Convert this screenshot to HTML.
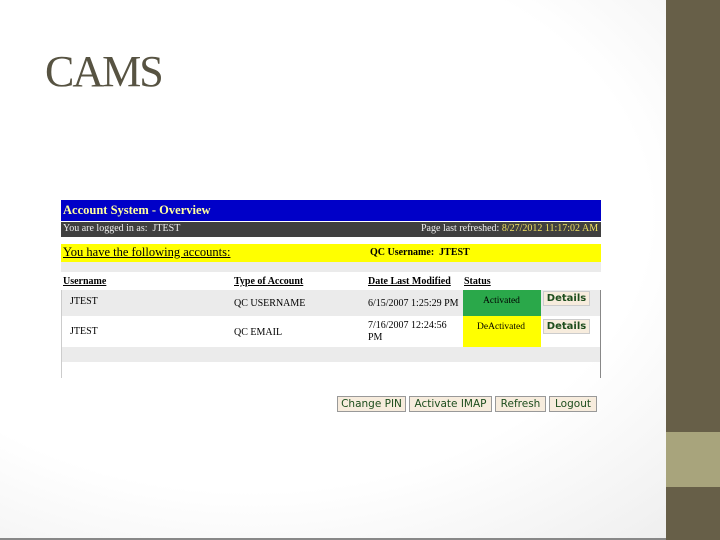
<!DOCTYPE html><html><head><style>
body{margin:0;width:720px;height:540px;position:relative;overflow:hidden;font-family:"Liberation Serif",serif;
background:radial-gradient(ellipse at 35% 40%,#fff 60%,#ececec 100%);}
.a{position:absolute}
.t{font-size:11px;white-space:nowrap}
.btn{position:absolute;top:396px;background:#f7ecdd;border:1px solid #999;font-family:"DejaVu Sans",sans-serif;font-size:10.5px;color:#1d4d1d;text-align:center;line-height:14px;box-sizing:border-box;height:16px}
</style></head><body>
<div class="a" style="left:666px;top:0;width:54px;height:540px;background:#675f48"></div>
<div class="a" style="left:666px;top:432px;width:54px;height:55px;background:#a8a47c"></div>
<div class="a" style="left:0;top:538px;width:666px;height:2px;background:#888"></div>
<div class="a" style="left:45px;top:46px;font-size:44px;color:#575342;letter-spacing:-2px">CAMS</div>

<div class="a" style="left:61px;top:200px;width:540px;height:21px;background:#0000c8"></div>
<div class="a t" style="left:63px;top:203px;font-size:12.5px;font-weight:bold;color:#ffffa0">Account System - Overview</div>
<div class="a" style="left:61px;top:222px;width:540px;height:15px;background:#3f3f3f"></div>
<div class="a t" style="left:63px;top:223px;font-size:10px;color:#eee">You are logged in as:&nbsp; JTEST</div>
<div class="a t" style="left:421px;top:223px;font-size:10px;color:#eee">Page last refreshed: <span style="color:#f0e060">8/27/2012 11:17:02 AM</span></div>
<div class="a" style="left:61px;top:244px;width:540px;height:18px;background:#ffff00"></div>
<div class="a t" style="left:63px;top:245px;font-size:12.5px;text-decoration:underline">You have the following accounts:</div>
<div class="a t" style="left:370px;top:247px;font-size:10px;font-weight:bold">QC Username:&nbsp; JTEST</div>
<div class="a" style="left:61px;top:262px;width:540px;height:10px;background:#ebebeb"></div>
<div class="a t" style="left:63px;top:276px;font-size:10px;font-weight:bold;text-decoration:underline">Username</div>
<div class="a t" style="left:234px;top:276px;font-size:10px;font-weight:bold;text-decoration:underline">Type of Account</div>
<div class="a t" style="left:368px;top:276px;font-size:10px;font-weight:bold;text-decoration:underline">Date Last Modified</div>
<div class="a t" style="left:464px;top:276px;font-size:10px;font-weight:bold;text-decoration:underline">Status</div>
<div class="a" style="left:61px;top:290px;width:540px;height:26px;background:#ebebeb"></div>
<div class="a" style="left:463px;top:290px;width:78px;height:26px;background:#2aa84a"></div>
<div class="a" style="left:463px;top:316px;width:78px;height:31px;background:#ffff00"></div>
<div class="a t" style="left:70px;top:296px;font-size:10px">JTEST</div>
<div class="a t" style="left:234px;top:298px;font-size:10px">QC USERNAME</div>
<div class="a t" style="left:368px;top:298px;font-size:10px">6/15/2007 1:25:29 PM</div>
<div class="a t" style="left:483px;top:296px;font-size:9.5px">Activated</div>
<div class="a t" style="left:70px;top:326px;font-size:10px">JTEST</div>
<div class="a t" style="left:234px;top:327px;font-size:10px">QC EMAIL</div>
<div class="a t" style="left:368px;top:320px;font-size:10px;line-height:12px">7/16/2007 12:24:56<br>PM</div>
<div class="a t" style="left:477px;top:322px;font-size:9.5px">DeActivated</div>
<div class="a" style="left:543px;top:291px;width:47px;height:15px;background:#f7ecdd;border:1px solid #ccc;font-family:'DejaVu Sans',sans-serif;font-size:10px;font-weight:bold;color:#1d4d1d;text-align:center;line-height:14px;box-sizing:border-box">Details</div>
<div class="a" style="left:543px;top:319px;width:47px;height:15px;background:#f7ecdd;border:1px solid #ccc;font-family:'DejaVu Sans',sans-serif;font-size:10px;font-weight:bold;color:#1d4d1d;text-align:center;line-height:14px;box-sizing:border-box">Details</div>
<div class="a" style="left:61px;top:347px;width:540px;height:15px;background:#ebebeb"></div>
<div class="a" style="left:61px;top:290px;width:1px;height:88px;background:#ccc"></div>
<div class="a" style="left:600px;top:290px;width:1px;height:88px;background:#888"></div>
<div class="btn" style="left:337px;width:69px">Change PIN</div>
<div class="btn" style="left:409px;width:83px">Activate IMAP</div>
<div class="btn" style="left:495px;width:51px">Refresh</div>
<div class="btn" style="left:549px;width:48px">Logout</div>
</body></html>
